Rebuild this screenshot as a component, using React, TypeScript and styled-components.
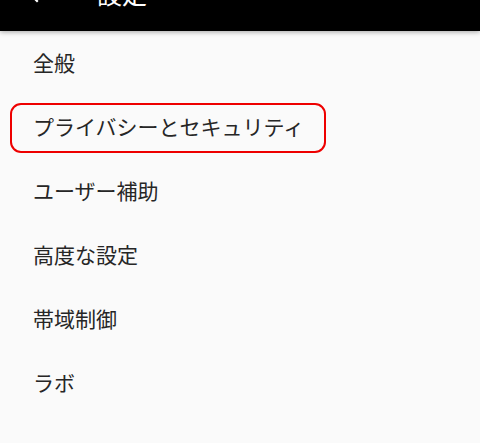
import React from "react";
import styled, { createGlobalStyle } from "styled-components";

const Global = createGlobalStyle`
  html, body { margin: 0; padding: 0; background: #fafafa; }
  body {
    font-family: "Noto Sans CJK JP", "Noto Sans", Roboto, sans-serif;
    -webkit-font-smoothing: antialiased;
  }
`;

const Screen = styled.div`
  width: 480px;
  height: 443px;
  overflow: hidden;
  background: #fafafa;
  display: flex;
  flex-direction: column;
`;

const Toolbar = styled.header`
  position: relative;
  z-index: 1;
  height: 31px;
  flex: none;
  background: #000;
  overflow: hidden;
  box-shadow: 0 1px 5px rgba(0, 0, 0, 0.35);
  display: flex;
  align-items: flex-end;
`;

const ToolbarRow = styled.div`
  display: flex;
  align-items: center;
  height: 56px;
  margin-bottom: 10px;
  padding-left: 22px;
  gap: 51px;
  flex: none;
`;

const BackIcon = styled.svg`
  width: 24px;
  height: 24px;
  flex: none;
`;

const Title = styled.h1`
  margin: 0;
  color: #fff;
  font-size: 25px;
  font-weight: 400;
  line-height: 1;
  font-family: "Noto Sans CJK JP", sans-serif;
`;

const List = styled.ul`
  list-style: none;
  margin: -1px 0 0;
  padding: 0;
  display: flex;
  flex-direction: column;
`;

const Row = styled.li`
  height: 64px;
  display: flex;
  align-items: center;
  padding-left: 10px;
`;

const Label = styled.span<{ $highlight?: boolean }>`
  display: inline-flex;
  align-items: center;
  box-sizing: border-box;
  height: 50px;
  margin-top: 4px;
  padding: 0 20px 4px 21px;
  border: 2.5px solid ${(p) => (p.$highlight ? "#ee0000" : "transparent")};
  border-radius: 11px;
  font-size: 21px;
  line-height: 1;
  color: #262626;
  font-family: "Noto Sans CJK JP", sans-serif;
`;

const items = [
  "全般",
  "プライバシーとセキュリティ",
  "ユーザー補助",
  "高度な設定",
  "帯域制御",
  "ラボ",
];

export default function App() {
  return (
    <Screen>
      <Global />
      <Toolbar>
        <ToolbarRow>
          <BackIcon viewBox="0 0 24 24" fill="none" stroke="#fff" strokeWidth={2.2} strokeLinecap="square">
            <path d="M15 4 L7 12 L15 20" />
          </BackIcon>
          <Title>設定</Title>
        </ToolbarRow>
      </Toolbar>
      <List>
        {items.map((t) => (
          <Row key={t}>
            <Label $highlight={t === "プライバシーとセキュリティ"}>{t}</Label>
          </Row>
        ))}
      </List>
    </Screen>
  );
}
